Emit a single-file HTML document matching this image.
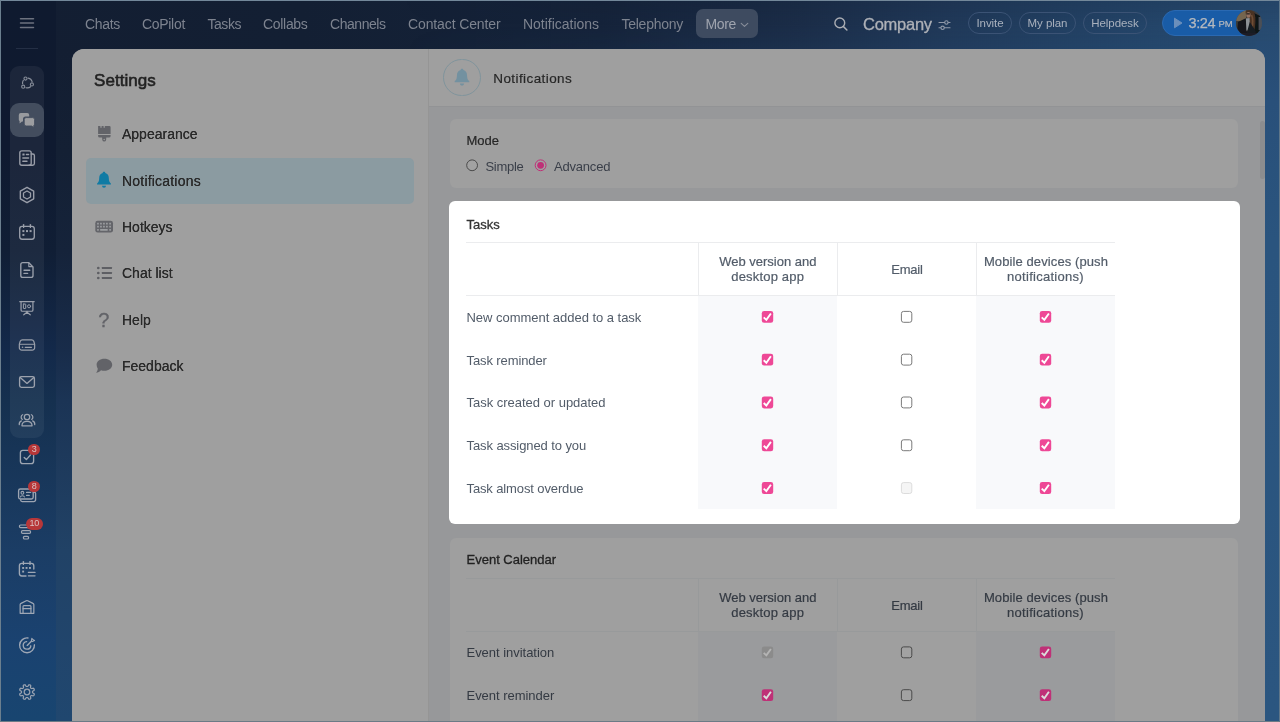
<!DOCTYPE html>
<html>
<head>
<meta charset="utf-8">
<title>Settings</title>
<style>
*{box-sizing:border-box;margin:0;padding:0}
html,body{width:1280px;height:722px;overflow:hidden}
body{font-family:"Liberation Sans",sans-serif;position:relative;background:#6b7f8e;color:#333}
.abs{position:absolute}
#top,#icons,#panel{will-change:transform}
#bg{position:absolute;left:1px;top:1px;width:1278px;height:720px;overflow:hidden;
 background:
  linear-gradient(180deg,rgba(16,27,49,1) 0px,rgba(16,27,49,1) 120px,rgba(16,27,49,0) 560px),
  linear-gradient(90deg,#1a4478 0px,#2c5280 200px,#33598a 1278px);
}
#hdr{position:absolute;left:0;top:0;width:1278px;height:60px;
 background:linear-gradient(90deg,#131e32 0px,#131f33 300px,#15233a 600px,#1b2d48 800px,#203959 950px,#244569 1155px,#284b70 1278px);}
#hdr2{position:absolute;left:400px;top:0;width:878px;height:48px;background:linear-gradient(180deg,rgba(8,14,30,0.10) 0px,rgba(8,14,30,0) 24px,rgba(45,100,155,0.07) 48px);-webkit-mask-image:linear-gradient(90deg,transparent 0,#000 300px);mask-image:linear-gradient(90deg,transparent 0,#000 300px)}
#side{position:absolute;left:0;top:0;width:55px;height:720px;
 background:linear-gradient(180deg,#0f1a2f 0px,#0f1a30 150px,#101e35 250px,#13294a 350px,#15304f 400px,#1b3d65 550px,#1a4270 640px,#184570 720px);}
#gutter{position:absolute;left:55px;top:48px;width:20px;height:672px;
 background:linear-gradient(180deg,#131e32 0px,#142034 102px,#15233a 202px,#182c4a 302px,#1b3455 352px,#214266 502px,#21456c 600px,#20476f 672px);}
#rgutter{position:absolute;left:1255px;top:40px;width:23px;height:680px;background:linear-gradient(180deg,#274b72 0,#29507a 60px,#2a547e 200px,#2b5680 680px)}
.nav{position:absolute;top:15px;font-size:14px;color:#7d838f;white-space:nowrap;line-height:18px}
.pill{position:absolute;top:12px;height:22px;border:1px solid #3b5375;border-radius:11px;color:#a9b1bd;font-size:11.5px;line-height:21px;text-align:center;letter-spacing:-0.05px}
#panel{position:absolute;left:72px;top:49px;width:1193px;height:690px;border-radius:12px 12px 0 0;background:#97989a;overflow:hidden}
#left{position:absolute;left:0;top:0;width:356px;height:690px;background:#9f9f9f}
#vline{position:absolute;left:356px;top:0;width:1px;height:690px;background:#959595}
#rhead{position:absolute;left:357px;top:0;width:836px;height:58px;background:#9f9f9f;border-bottom:1px solid #929395}
.mi{position:absolute;left:50px;font-size:14px;color:#2a2a2a;line-height:18px;white-space:nowrap;text-shadow:0 0 0.3px #2a2a2a}
.card{position:absolute;left:378px;width:788px;border-radius:6px;background:#9f9f9f}
.ct{position:absolute;left:16px;font-size:13px;line-height:16px;white-space:nowrap}
.th{position:absolute;font-size:13px;line-height:15px;text-align:center;white-space:nowrap}
.rl{position:absolute;left:16px;font-size:13px;line-height:16px;white-space:nowrap}
.cb{position:absolute;width:12px;height:12px;border-radius:2.5px}
.cb svg{position:absolute;left:0;top:0}
</style>
</head>
<body>
<div id="bg">
 <div id="hdr"></div><div id="hdr2"></div>
 <div id="side"></div>
 <div id="gutter"></div>
 <div id="rgutter"></div>
</div>
<div id="top">
 <svg class="abs" style="left:19px;top:17px" width="16" height="12" viewBox="0 0 16 12"><g stroke="#6d727f" stroke-width="1.5" stroke-linecap="round"><line x1="1.5" y1="1.8" x2="14.5" y2="1.8"/><line x1="1.5" y1="6.1" x2="14.5" y2="6.1"/><line x1="1.5" y1="10.4" x2="14.5" y2="10.4"/></g></svg>
 <div class="abs" style="left:16px;top:48px;width:22px;height:1px;background:#242f45"></div>
 <span class="nav" style="left:85px;letter-spacing:-0.32px">Chats</span>
 <span class="nav" style="left:142px;letter-spacing:-0.31px">CoPilot</span>
 <span class="nav" style="left:207.5px;letter-spacing:-0.46px">Tasks</span>
 <span class="nav" style="left:263px;letter-spacing:-0.31px">Collabs</span>
 <span class="nav" style="left:330px;letter-spacing:-0.46px">Channels</span>
 <span class="nav" style="left:408px;letter-spacing:-0.12px">Contact Center</span>
 <span class="nav" style="left:523px;letter-spacing:-0.02px">Notifications</span>
 <span class="nav" style="left:621.5px;letter-spacing:-0.26px">Telephony</span>
 <div class="abs" style="left:696px;top:9px;width:62px;height:29px;border-radius:7px;background:#3e4b60"></div>
 <span class="nav" style="left:705.5px;letter-spacing:-0.4px;color:#9fa4ae">More</span>
 <svg class="abs" style="left:740px;top:22px" width="9" height="6" viewBox="0 0 9 6"><path d="M1.2 1.3 L4.5 4.4 L7.8 1.3" fill="none" stroke="#888e9a" stroke-width="1.1" stroke-linecap="round" stroke-linejoin="round"/></svg>
 <svg class="abs" style="left:832px;top:15px" width="18" height="18" viewBox="0 0 18 18"><circle cx="7.8" cy="7.9" r="4.9" fill="none" stroke="#abaeb4" stroke-width="1.4"/><line x1="11.5" y1="11.6" x2="14.9" y2="15" stroke="#abaeb4" stroke-width="1.5" stroke-linecap="round"/></svg>
 <span class="abs" style="left:863px;top:14px;font-size:16.5px;line-height:20px;color:#aeb1b7;letter-spacing:-0.25px;white-space:nowrap;-webkit-text-stroke:0.3px #aeb1b7">Company</span>
 <svg class="abs" style="left:938px;top:19px" width="13" height="12" viewBox="0 0 13 12"><g fill="none" stroke="#8f98a8" stroke-width="1.1" stroke-linecap="round"><line x1="1" y1="3.5" x2="6.5" y2="3.5"/><line x1="10.3" y1="3.5" x2="12" y2="3.5"/><circle cx="8.4" cy="3.5" r="1.7"/><line x1="1" y1="8.8" x2="2.6" y2="8.8"/><line x1="6.5" y1="8.8" x2="12" y2="8.8"/><circle cx="4.6" cy="8.8" r="1.7"/></g></svg>
 <div class="pill" style="left:968px;width:44px">Invite</div>
 <div class="pill" style="left:1019px;width:57px">My plan</div>
 <div class="pill" style="left:1083px;width:64px">Helpdesk</div>
 <div class="abs" style="left:1162px;top:10px;width:100px;height:26px;border-radius:13px;background:#195ca7;border:1px solid #2a69b2"></div>
 <svg class="abs" style="left:1173px;top:17px" width="10" height="12" viewBox="0 0 10 12"><path d="M1.5 1.2 L9 6 L1.5 10.8 Z" fill="#6b8fbc" stroke="#6b8fbc" stroke-width="1" stroke-linejoin="round"/></svg>
 <span class="abs" style="left:1188.5px;top:14px;font-size:14.5px;line-height:18px;color:#b4b8be;letter-spacing:-0.4px;white-space:nowrap;-webkit-text-stroke:0.25px #b4b8be">3:24</span>
 <span class="abs" style="left:1218.5px;top:17px;font-size:9.5px;line-height:14px;color:#b4b8be;letter-spacing:-0.2px;white-space:nowrap;-webkit-text-stroke:0.2px #b4b8be">PM</span>
 <div class="abs" id="ava" style="left:1236px;top:10px;width:26px;height:26px;border-radius:13px;overflow:hidden;background:#3a3f44">
  <svg width="26" height="26" viewBox="0 0 26 26"><defs><filter id="bl" x="-10%" y="-10%" width="120%" height="120%"><feGaussianBlur stdDeviation="0.55"/></filter></defs><g filter="url(#bl)"><rect x="-2" y="-2" width="30" height="30" fill="#3b3a38"/><rect x="-1" y="-1" width="11" height="12" fill="#74654f"/><rect x="19" y="-1" width="8" height="9" fill="#3a3d40"/><path d="M18 3 L24 6 L25 22 L18 24 Z" fill="#101318"/><rect x="22.6" y="7" width="4" height="13" fill="#4b5056"/><path d="M9.5 1.5 C12 -0.5 17 -0.5 18.5 3 C20 8 19.5 14 18.5 20 L14 21 L13.5 9 L10 5 Z" fill="#4a3324"/><path d="M15.6 5 C17.2 9 17 14 15.8 19.5" stroke="#6f4d35" stroke-width="1.6" fill="none"/><ellipse cx="12.4" cy="4.9" rx="2.1" ry="2.8" fill="#94705e"/><rect x="10.4" y="3.2" width="3.4" height="1.3" fill="#2a2320"/><path d="M9.8 8.5 L13.6 8 L13.8 20.5 L10 20.5 Z" fill="#8e9297"/><path d="M2 12 L9.8 8.2 L10.4 21 L13 24 L7 27 L1 22 Z" fill="#14181d"/><path d="M13.8 12 L19 20 L21 27 L9 27 L11 22 Z" fill="#171a21"/><rect x="-1" y="23" width="28" height="4" fill="#1b1e25"/></g></svg>
 </div>
</div>
<div id="icons"><div class="abs" style="left:10px;top:66px;width:34px;height:372px;border-radius:9px;background:rgba(255,255,255,0.055)"></div>
<div class="abs" style="left:10px;top:103px;width:34px;height:34px;border-radius:9px;background:#434d5e"></div><svg class="abs" style="left:15px;top:71.3px" width="24" height="24" viewBox="-12 -12 24 24" fill="none" stroke="#878d99" stroke-width="1.35" stroke-linecap="round" stroke-linejoin="round"><g transform="translate(0.4 0)"><path d="M0.85 -4.83 A4.9 4.9 0 0 1 4.71 -1.35" stroke-width="1.2"/><path d="M3.15 3.75 A4.9 4.9 0 0 1 -1.35 4.71" stroke-width="1.2"/><path d="M-4.84 0.77 A4.9 4.9 0 0 1 -4.06 -2.74" stroke-width="1.2"/><circle cx="-1.9" cy="-4.4" r="1.55" stroke-width="1.1"/><circle cx="4.5" cy="1.4" r="1.55" stroke-width="1.1"/><circle cx="-4.2" cy="3.7" r="1.55" stroke-width="1.1"/></g></svg><svg class="abs" style="left:15px;top:108px" width="24" height="24" viewBox="-12 -12 24 24"><path d="M-6.2 -7 H0.2 A2 2 0 0 1 2.2 -5 V-3.6 H-1.4 A2.6 2.6 0 0 0 -4 -1 V1.6 H-5 L-7.4 3.6 V1 A2 2 0 0 1 -8.2 -0.6 V-5 A2 2 0 0 1 -6.2 -7Z" fill="#999b9f"/><path d="M-0.8 -2.4 H5.6 A2 2 0 0 1 7.6 -0.4 V4 A2 2 0 0 1 6.8 5.6 V7.6 L4.6 6 H-0.8 A2 2 0 0 1 -2.8 4 V-0.4 A2 2 0 0 1 -0.8 -2.4Z" fill="#9c9da0" stroke="#434d5e" stroke-width="0.9"/></svg><svg class="abs" style="left:15px;top:146px" width="24" height="24" viewBox="-12 -12 24 24" fill="none" stroke="#9a9ea8" stroke-width="1.35" stroke-linecap="round" stroke-linejoin="round"><rect x="-7.2" y="-7.2" width="11.4" height="14.4" rx="2"/><path d="M4.2 -4 H5.8 A1.6 1.6 0 0 1 7.4 -2.4 V5.4 A1.8 1.8 0 0 1 5.6 7.2 H2"/><rect x="-4.6" y="-4.6" width="2.2" height="2.2" rx="0.3" fill="#989da8" stroke="none"/><line x1="-0.6" y1="-3.5" x2="1.6" y2="-3.5"/><line x1="-4.2" y1="0" x2="1.6" y2="0"/><line x1="-4.2" y1="3.2" x2="0" y2="3.2"/></svg><svg class="abs" style="left:15px;top:183px" width="24" height="24" viewBox="-12.77 -12.77 25.53 25.53" fill="none" stroke="#9a9ea9" stroke-width="1.35" stroke-linecap="round" stroke-linejoin="round"><polygon points="7.10,4.10 0.00,8.20 -7.10,4.10 -7.10,-4.10 -0.00,-8.20 7.10,-4.10" stroke-width="1.5"/><polygon points="3.72,2.15 0.00,4.30 -3.72,2.15 -3.72,-2.15 -0.00,-4.30 3.72,-2.15" stroke-width="1.4"/></svg><svg class="abs" style="left:15px;top:220px" width="24" height="24" viewBox="-12 -12 24 24" fill="none" stroke="#9a9faa" stroke-width="1.35" stroke-linecap="round" stroke-linejoin="round"><rect x="-7.3" y="-5.6" width="14.6" height="12.8" rx="2.4"/><line x1="-3.4" y1="-7.4" x2="-3.4" y2="-4.6"/><line x1="3.4" y1="-7.4" x2="3.4" y2="-4.6"/><g stroke="none" fill="#9a9faa"><rect x="-4.6" y="-1.9" width="2" height="2"/><rect x="-1" y="-1.9" width="2" height="2"/><rect x="2.6" y="-1.9" width="2" height="2"/><rect x="-4.6" y="1.9" width="2" height="2"/></g></svg><svg class="abs" style="left:15px;top:258px" width="24" height="24" viewBox="-12 -12 24 24" fill="none" stroke="#9ba0ab" stroke-width="1.35" stroke-linecap="round" stroke-linejoin="round"><path d="M-4.2 -7.4 H1.6 L6 -3 V5.4 A2 2 0 0 1 4 7.4 H-4.2 A2 2 0 0 1 -6.2 5.4 V-5.4 A2 2 0 0 1 -4.2 -7.4Z"/><path d="M1.8 -7 V-3.4 H5.6" stroke-width="1.1"/><line x1="-3" y1="0.2" x2="2.8" y2="0.2"/><line x1="-3" y1="3.4" x2="0.6" y2="3.4"/></svg><svg class="abs" style="left:15px;top:296px" width="24" height="24" viewBox="-13.33 -13.33 26.67 26.67" fill="none" stroke="#9ca1ac" stroke-width="1.35" stroke-linecap="round" stroke-linejoin="round"><line x1="-8" y1="-7" x2="8" y2="-7"/><path d="M-6.6 -7 V2.2 A1.4 1.4 0 0 0 -5.2 3.6 H5.2 A1.4 1.4 0 0 0 6.6 2.2 V-7"/><line x1="0" y1="3.6" x2="0" y2="5"/><path d="M-3.6 7.6 L0 4.8 L3.6 7.6"/><rect x="-4" y="-4.4" width="2.6" height="5" rx="0.4" stroke-width="1.1"/><circle cx="2.3" cy="-1.9" r="1.7" stroke-width="1.1"/></svg><svg class="abs" style="left:15px;top:333px" width="24" height="24" viewBox="-13.48 -13.48 26.97 26.97" fill="none" stroke="#9ca1ac" stroke-width="1.35" stroke-linecap="round" stroke-linejoin="round"><path d="M-5.2 -5.8 H5.2 A2.6 2.6 0 0 1 7.6 -4.2 L8.6 -1 V3 A2.8 2.8 0 0 1 5.8 5.8 H-5.8 A2.8 2.8 0 0 1 -8.6 3 V-1 L-7.6 -4.2 A2.6 2.6 0 0 1 -5.2 -5.8Z"/><path d="M-8.4 -0.8 H8.4" stroke-width="1.1"/><line x1="-2" y1="2.6" x2="5" y2="2.6"/><circle cx="-5" cy="2.6" r="0.9" fill="#9ca1ac" stroke="none"/></svg><svg class="abs" style="left:15px;top:370.3px" width="24" height="24" viewBox="-12 -12 24 24" fill="none" stroke="#9ca2ad" stroke-width="1.35" stroke-linecap="round" stroke-linejoin="round"><rect x="-7.4" y="-5.4" width="14.8" height="10.8" rx="1.8"/><path d="M-6.8 -4.6 L0 1.4 L6.8 -4.6"/></svg><svg class="abs" style="left:15px;top:407.5px" width="24" height="24" viewBox="-12.77 -12.77 25.53 25.53" fill="none" stroke="#9ca3af" stroke-width="1.35" stroke-linecap="round" stroke-linejoin="round"><circle cx="0" cy="-3.2" r="2.9"/><path d="M-5.4 6.2 C-5.4 2.6 -3 1.4 0 1.4 C3 1.4 5.4 2.6 5.4 6.2 Z"/><path d="M-4.6 -5.6 C-6.6 -4.8 -6.8 -1.8 -5 -0.6"/><path d="M4.6 -5.6 C6.6 -4.8 6.8 -1.8 5 -0.6"/><path d="M-6 1 C-8 1.8 -8.4 3.6 -8.2 5"/><path d="M6 1 C8 1.8 8.4 3.6 8.2 5"/></svg><svg class="abs" style="left:14.8px;top:445.2px" width="24" height="24" viewBox="-12 -12 24 24" fill="none" stroke="#9da5b1" stroke-width="1.35" stroke-linecap="round" stroke-linejoin="round"><rect x="-6.6" y="-6.6" width="13.2" height="13.2" rx="2.4"/><path d="M-2.8 0.4 L-0.6 2.6 L3.4 -2"/></svg><svg class="abs" style="left:14.8px;top:482.6px" width="24" height="24" viewBox="-12 -12 24 24" fill="none" stroke="#9da5b2" stroke-width="1.35" stroke-linecap="round" stroke-linejoin="round"><rect x="-8.4" y="-6" width="14.6" height="10" rx="1.8"/><path d="M6.2 -3 H7 A1.6 1.6 0 0 1 8.6 -1.4 V4.8 A1.8 1.8 0 0 1 6.8 6.6 H-4.8 A1.8 1.8 0 0 1 -6.4 5"/><circle cx="-4.6" cy="-2.2" r="1.4" stroke-width="1.1"/><path d="M-6.6 2 C-6.4 0.4 -2.8 0.4 -2.6 2" stroke-width="1.1"/><line x1="-0.4" y1="-2.6" x2="3.6" y2="-2.6"/><line x1="-0.4" y1="0.4" x2="2.2" y2="0.4"/></svg><svg class="abs" style="left:14.399999999999999px;top:520px" width="24" height="24" viewBox="-12 -12 24 24" fill="none" stroke="#9ea6b3" stroke-width="1.35" stroke-linecap="round" stroke-linejoin="round"><rect x="-6.6" y="-7" width="13.2" height="2.6" rx="1.3" stroke-width="1.2"/><rect x="-4.6" y="-1.3" width="9.2" height="2.6" rx="1.3" stroke-width="1.2"/><rect x="-2.6" y="4.4" width="5.2" height="2.6" rx="1.3" stroke-width="1.2"/></svg><svg class="abs" style="left:15px;top:557px" width="24" height="24" viewBox="-12 -12 24 24" fill="none" stroke="#9ea7b4" stroke-width="1.35" stroke-linecap="round" stroke-linejoin="round"><path d="M-1 7 H-5.2 A2.4 2.4 0 0 1 -7.6 4.6 V-3.2 A2.4 2.4 0 0 1 -5.2 -5.6 H4.4 A2.4 2.4 0 0 1 6.8 -3.2 V0"/><line x1="-3.6" y1="-7.4" x2="-3.6" y2="-4.6"/><line x1="3" y1="-7.4" x2="3" y2="-4.6"/><g stroke="none" fill="#9ea7b4"><rect x="-4.8" y="-2" width="1.9" height="1.9"/><rect x="-1.4" y="-2" width="1.9" height="1.9"/><rect x="2" y="-2" width="1.9" height="1.9"/><rect x="-4.8" y="1.6" width="1.9" height="1.9"/></g><line x1="1.4" y1="3.4" x2="8" y2="3.4"/><line x1="1.4" y1="6.8" x2="8" y2="6.8"/></svg><svg class="abs" style="left:15px;top:594.7px" width="24" height="24" viewBox="-13.33 -13.33 26.67 26.67" fill="none" stroke="#9ea7b5" stroke-width="1.35" stroke-linecap="round" stroke-linejoin="round"><path d="M-7.6 7 V-2.6 A1.6 1.6 0 0 1 -6.6 -4 L-0.8 -6.9 A1.8 1.8 0 0 1 0.8 -6.9 L6.6 -4 A1.6 1.6 0 0 1 7.6 -2.6 V7 Z"/><path d="M-4.4 7 V-0.6 A1 1 0 0 1 -3.4 -1.6 H3.4 A1 1 0 0 1 4.4 -0.6 V7"/><line x1="-4.4" y1="1.8" x2="4.4" y2="1.8"/></svg><svg class="abs" style="left:15px;top:632.8px" width="24" height="24" viewBox="-12 -12 24 24" fill="none" stroke="#9ea7b5" stroke-width="1.35" stroke-linecap="round" stroke-linejoin="round"><path d="M1 -7 A7.4 7.4 0 1 0 7.4 -0.2"/><path d="M-0.4 -3.4 A3.8 3.8 0 1 0 3.8 0.8"/><line x1="0.2" y1="0.4" x2="4.4" y2="-3.8"/><path d="M4.4 -3.8 L4.8 -6.6 L6.2 -5.2 L7.6 -4.6 L5.4 -3.4 Z" stroke-width="1.1"/></svg><svg class="abs" style="left:15px;top:680px" width="24" height="24" viewBox="-12.77 -12.77 25.53 25.53" fill="none" stroke="#9aa3b1" stroke-width="1.35" stroke-linecap="round" stroke-linejoin="round"><path d="M7.53 3.12 L7.42 3.36 L7.29 3.59 L7.12 3.81 L6.88 3.97 L6.46 4.02 L5.82 3.89 L5.20 3.72 L4.80 3.69 L4.58 3.76 L4.42 3.87 L4.27 4.00 L4.14 4.14 L4.00 4.27 L3.87 4.42 L3.76 4.58 L3.69 4.80 L3.72 5.20 L3.89 5.82 L4.02 6.46 L3.97 6.88 L3.81 7.12 L3.59 7.29 L3.36 7.42 L3.12 7.53 L2.87 7.62 L2.61 7.70 L2.34 7.73 L2.06 7.67 L1.73 7.41 L1.37 6.87 L1.04 6.31 L0.79 6.00 L0.58 5.89 L0.38 5.86 L0.19 5.85 L0.00 5.85 L-0.19 5.85 L-0.38 5.86 L-0.58 5.89 L-0.79 6.00 L-1.04 6.31 L-1.37 6.87 L-1.73 7.41 L-2.06 7.67 L-2.34 7.73 L-2.61 7.70 L-2.87 7.62 L-3.12 7.53 L-3.36 7.42 L-3.59 7.29 L-3.81 7.12 L-3.97 6.88 L-4.02 6.46 L-3.89 5.82 L-3.72 5.20 L-3.69 4.80 L-3.76 4.58 L-3.87 4.42 L-4.00 4.27 L-4.14 4.14 L-4.27 4.00 L-4.42 3.87 L-4.58 3.76 L-4.80 3.69 L-5.20 3.72 L-5.82 3.89 L-6.46 4.02 L-6.88 3.97 L-7.12 3.81 L-7.29 3.59 L-7.42 3.36 L-7.53 3.12 L-7.62 2.87 L-7.70 2.61 L-7.73 2.34 L-7.67 2.06 L-7.41 1.73 L-6.87 1.37 L-6.31 1.04 L-6.00 0.79 L-5.89 0.58 L-5.86 0.38 L-5.85 0.19 L-5.85 0.00 L-5.85 -0.19 L-5.86 -0.38 L-5.89 -0.58 L-6.00 -0.79 L-6.31 -1.04 L-6.87 -1.37 L-7.41 -1.73 L-7.67 -2.06 L-7.73 -2.34 L-7.70 -2.61 L-7.62 -2.87 L-7.53 -3.12 L-7.42 -3.36 L-7.29 -3.59 L-7.12 -3.81 L-6.88 -3.97 L-6.46 -4.02 L-5.82 -3.89 L-5.20 -3.72 L-4.80 -3.69 L-4.58 -3.76 L-4.42 -3.87 L-4.27 -4.00 L-4.14 -4.14 L-4.00 -4.27 L-3.87 -4.42 L-3.76 -4.58 L-3.69 -4.80 L-3.72 -5.20 L-3.89 -5.82 L-4.02 -6.46 L-3.97 -6.88 L-3.81 -7.12 L-3.59 -7.29 L-3.36 -7.42 L-3.12 -7.53 L-2.87 -7.62 L-2.61 -7.70 L-2.34 -7.73 L-2.06 -7.67 L-1.73 -7.41 L-1.37 -6.87 L-1.04 -6.31 L-0.79 -6.00 L-0.58 -5.89 L-0.38 -5.86 L-0.19 -5.85 L-0.00 -5.85 L0.19 -5.85 L0.38 -5.86 L0.58 -5.89 L0.79 -6.00 L1.04 -6.31 L1.37 -6.87 L1.73 -7.41 L2.06 -7.67 L2.34 -7.73 L2.61 -7.70 L2.87 -7.62 L3.12 -7.53 L3.36 -7.42 L3.59 -7.29 L3.81 -7.12 L3.97 -6.88 L4.02 -6.46 L3.89 -5.82 L3.72 -5.20 L3.69 -4.80 L3.76 -4.58 L3.87 -4.42 L4.00 -4.27 L4.14 -4.14 L4.27 -4.00 L4.42 -3.87 L4.58 -3.76 L4.80 -3.69 L5.20 -3.72 L5.82 -3.89 L6.46 -4.02 L6.88 -3.97 L7.12 -3.81 L7.29 -3.59 L7.42 -3.36 L7.53 -3.12 L7.62 -2.87 L7.70 -2.61 L7.73 -2.34 L7.67 -2.06 L7.41 -1.73 L6.87 -1.37 L6.31 -1.04 L6.00 -0.79 L5.89 -0.58 L5.86 -0.38 L5.85 -0.19 L5.85 -0.00 L5.85 0.19 L5.86 0.38 L5.89 0.58 L6.00 0.79 L6.31 1.04 L6.87 1.37 L7.41 1.73 L7.67 2.06 L7.73 2.34 L7.70 2.61 L7.62 2.87Z" stroke-width="1.3"/><circle cx="0" cy="0" r="3" stroke-width="1.3"/></svg><div class="abs" style="left:28.3px;top:443.6px;width:11.5px;height:11.5px;border-radius:6px;background:#b73739;color:#dcc3c3;font-size:9px;line-height:11.5px;text-align:center;letter-spacing:-0.2px">3</div><div class="abs" style="left:28.3px;top:480.8px;width:11.5px;height:11.5px;border-radius:6px;background:#b73739;color:#dcc3c3;font-size:9px;line-height:11.5px;text-align:center;letter-spacing:-0.2px">8</div><div class="abs" style="left:25.5px;top:518.4px;width:17.6px;height:11.5px;border-radius:6px;background:#b73739;color:#dcc3c3;font-size:9px;line-height:11.5px;text-align:center;letter-spacing:-0.2px">10</div></div>
<div id="panel">
 <div id="left">
  <span class="abs" style="left:22px;top:21px;font-size:17px;line-height:22px;color:#222;white-space:nowrap;-webkit-text-stroke:0.55px #222;letter-spacing:0.05px">Settings</span>
  <div class="abs" style="left:14px;top:108.5px;width:328px;height:46px;border-radius:5px;background:#8b9ba1"></div>
  <!-- brush -->
  <svg class="abs" style="left:24px;top:76px" width="18" height="19" viewBox="0 0 18 19"><g fill="#626368"><path d="M2.1 1.1 H4.4 V2.7 H5.6 V1.1 H7.6 V2.7 H8.8 V1.1 H13.4 A1.2 1.2 0 0 1 14.6 2.3 V9 H2.1 Z"/><path d="M2.1 9.9 H14.6 V11 A1.6 1.6 0 0 1 13 12.6 H10.3 L10.1 15 A1.95 1.95 0 0 1 6.3 15 L6.1 12.6 H3.7 A1.6 1.6 0 0 1 2.1 11 Z"/></g><circle cx="8.2" cy="14.5" r="0.75" fill="#9f9f9f"/></svg>
  <span class="mi" style="top:76px">Appearance</span>
  <!-- bell -->
  <svg class="abs" style="left:24.3px;top:122px" width="16" height="18" viewBox="0 0 16 18"><path d="M8 0.8 C8.8 0.8 9.3 1.3 9.3 2 C11.6 2.6 12.8 4.5 12.8 7 C12.8 10 13.6 11.4 14.8 12.4 C15.2 12.8 15 13.6 14.4 13.6 H1.6 C1 13.6 0.8 12.8 1.2 12.4 C2.4 11.4 3.2 10 3.2 7 C3.2 4.5 4.4 2.6 6.7 2 C6.7 1.3 7.2 0.8 8 0.8Z" fill="#107ba4"/><path d="M6 14.8 H10 A2 2 0 0 1 6 14.8Z" fill="#107ba4"/></svg>
  <span class="mi" style="top:122.5px;letter-spacing:0.2px">Notifications</span>
  <!-- keyboard -->
  <svg class="abs" style="left:23px;top:171px" width="20" height="14" viewBox="0 0 20 14"><g transform="translate(0.3 0.8)"><rect x="0" y="0" width="17.7" height="11.8" rx="2.4" fill="#64656a"/><g fill="#9c9ea1"><rect x="1.81" y="1.95" width="1.7" height="1.7" rx="0.3"/><rect x="1.81" y="4.95" width="1.7" height="1.7" rx="0.3"/><rect x="4.80" y="1.95" width="1.7" height="1.7" rx="0.3"/><rect x="4.80" y="4.95" width="1.7" height="1.7" rx="0.3"/><rect x="7.79" y="1.95" width="1.7" height="1.7" rx="0.3"/><rect x="7.79" y="4.95" width="1.7" height="1.7" rx="0.3"/><rect x="10.75" y="1.95" width="1.7" height="1.7" rx="0.3"/><rect x="10.75" y="4.95" width="1.7" height="1.7" rx="0.3"/><rect x="13.95" y="1.95" width="1.7" height="1.7" rx="0.3"/><rect x="13.95" y="4.95" width="1.7" height="1.7" rx="0.3"/><rect x="1.81" y="8.15" width="1.7" height="1.7" rx="0.3"/><rect x="4.8" y="8.15" width="7.65" height="1.7" rx="0.3"/><rect x="13.95" y="8.15" width="1.7" height="1.7" rx="0.3"/></g></g></svg>
  <span class="mi" style="top:169px">Hotkeys</span>
  <!-- list -->
  <svg class="abs" style="left:24px;top:216px" width="18" height="16" viewBox="0 0 18 16"><g fill="#5e5f64"><circle cx="2.3" cy="3" r="1.35"/><circle cx="2.3" cy="8" r="1.35"/><circle cx="2.3" cy="13" r="1.35"/><rect x="5.8" y="2.05" width="10.2" height="1.9" rx="0.4"/><rect x="5.8" y="7.05" width="10.2" height="1.9" rx="0.4"/><rect x="5.8" y="12.05" width="10.2" height="1.9" rx="0.4"/></g></svg>
  <span class="mi" style="top:215px">Chat list</span>
  <!-- ? -->
  <span class="abs" style="left:26.3px;top:258.5px;font-size:20px;line-height:24px;color:#626368;-webkit-text-stroke:0.3px #626368">?</span>
  <span class="mi" style="top:261.5px">Help</span>
  <!-- bubble -->
  <svg class="abs" style="left:23px;top:309px" width="18" height="16" viewBox="0 0 18 16"><path d="M9.4 0.8 C13.8 0.8 17.2 3.4 17.2 6.8 C17.2 10.2 13.8 12.8 9.4 12.8 C8.2 12.8 7 12.6 6 12.2 C4.8 13.6 3 14.6 1 14.8 C2 13.8 2.6 12.4 2.8 10.8 C2 9.6 1.6 8.2 1.6 6.8 C1.6 3.4 5 0.8 9.4 0.8Z" fill="#626368"/></svg>
  <span class="mi" style="top:308px">Feedback</span>
 </div>
 <div id="vline"></div>
 <div id="rhead"></div>
<div id="content"><div class="abs" style="left:371px;top:9.5px;width:37.5px;height:37.5px;border-radius:50%;border:1px solid #80949c"></div>
<svg class="abs" style="left:381px;top:19px" width="18" height="19" viewBox="0 0 16 18"><path d="M8 0.8 C8.8 0.8 9.3 1.3 9.3 2 C11.6 2.6 12.8 4.5 12.8 7 C12.8 10 13.6 11.4 14.8 12.4 C15.2 12.8 15 13.6 14.4 13.6 H1.6 C1 13.6 0.8 12.8 1.2 12.4 C2.4 11.4 3.2 10 3.2 7 C3.2 4.5 4.4 2.6 6.7 2 C6.7 1.3 7.2 0.8 8 0.8Z" fill="#7391a0"/><path d="M6 14.8 H10 A2 2 0 0 1 6 14.8Z" fill="#7391a0"/></svg>
<span class="abs" style="left:421.3px;top:20.5px;font-size:13.5px;line-height:18px;color:#262626;white-space:nowrap;letter-spacing:0.41px;-webkit-text-stroke:0.18px #262626">Notifications</span>
<div class="card" style="top:70px;height:69px"></div>
<span class="ct abs" style="left:394.5px;top:84.30000000000001px;color:#262626;-webkit-text-stroke:0.2px #262626">Mode</span>
<svg class="abs" style="left:393px;top:109px" width="15" height="15" viewBox="0 0 15 15"><circle cx="7.1" cy="7.3" r="5.4" fill="#a2a2a2" stroke="#4a4a4a" stroke-width="1"/></svg>
<span class="rl" style="left:413.5px;top:109.80000000000001px;color:#3a3f49;letter-spacing:-0.3px">Simple</span>
<svg class="abs" style="left:461px;top:109px" width="15" height="15" viewBox="0 0 15 15"><circle cx="7.6" cy="7.3" r="5.4" fill="#a2a2a2" stroke="#bf3077" stroke-width="1"/><circle cx="7.6" cy="7.3" r="3.4" fill="#bf3077"/></svg>
<span class="rl" style="left:482px;top:109.80000000000001px;color:#3a3f49;letter-spacing:-0.2px">Advanced</span>
<div class="card" style="left:377px;top:152px;width:791px;height:323px;background:#fff;border-radius:6px"></div>
<span class="ct abs" style="left:394.5px;top:167.6px;color:#333;-webkit-text-stroke:0.3px #333">Tasks</span>
<div class="abs" style="left:394px;top:193px;width:649px;height:1px;background:#ebecee"></div>
<div class="abs" style="left:394px;top:246px;width:649px;height:1px;background:#ebecee"></div>
<div class="abs" style="left:626px;top:193px;width:1px;height:53px;background:#ebecee"></div>
<div class="abs" style="left:765px;top:193px;width:1px;height:53px;background:#ebecee"></div>
<div class="abs" style="left:904px;top:193px;width:1px;height:53px;background:#ebecee"></div>
<div class="abs" style="left:626px;top:247px;width:139px;height:212.5px;background:#f8f9fb"></div>
<div class="abs" style="left:904px;top:247px;width:139px;height:212.5px;background:#f8f9fb"></div>
<span class="th" style="left:615.8px;width:160px;top:205.2px;color:#525c69;letter-spacing:0px;-webkit-text-stroke:0.2px #525c69">Web version and</span>
<span class="th" style="left:615.7px;width:160px;top:220.2px;color:#525c69;letter-spacing:0.18px;-webkit-text-stroke:0.2px #525c69">desktop app</span>
<span class="th" style="left:755px;width:160px;top:213.2px;color:#525c69;letter-spacing:-0.2px;-webkit-text-stroke:0.2px #525c69">Email</span>
<span class="th" style="left:894px;width:160px;top:205.2px;color:#525c69;letter-spacing:0.1px;-webkit-text-stroke:0.2px #525c69">Mobile devices (push</span>
<span class="th" style="left:893.5px;width:160px;top:220.2px;color:#525c69;letter-spacing:0.28px;-webkit-text-stroke:0.2px #525c69">notifications)</span>
<span class="rl" style="left:394.5px;top:260.7px;color:#525c69;letter-spacing:-0.03px">New comment added to a task</span>
<svg class="abs" style="left:688px;top:260px" width="15" height="15" viewBox="0 0 15 15"><g transform="translate(1.80 1.90)"><rect x="0" y="0" width="11.4" height="11.9" rx="2.3" fill="#ee4896"/><path d="M1.9 6.5 L4.55 9.0 L9.1 2.6" fill="none" stroke="#fff" stroke-width="1.9" stroke-linejoin="miter"/></g></svg>
<svg class="abs" style="left:827px;top:260px" width="15" height="15" viewBox="0 0 15 15"><g transform="translate(1.90 1.90)"><rect x="0.5" y="0.5" width="10.4" height="10.9" rx="2.2" fill="#fff" stroke="#7a7a7a" stroke-width="1"/></g></svg>
<svg class="abs" style="left:966px;top:260px" width="15" height="15" viewBox="0 0 15 15"><g transform="translate(1.80 1.90)"><rect x="0" y="0" width="11.4" height="11.9" rx="2.3" fill="#ee4896"/><path d="M1.9 6.5 L4.55 9.0 L9.1 2.6" fill="none" stroke="#fff" stroke-width="1.9" stroke-linejoin="miter"/></g></svg>
<span class="rl" style="left:394.5px;top:303.5px;color:#525c69;letter-spacing:-0.1px">Task reminder</span>
<svg class="abs" style="left:688px;top:303px" width="15" height="15" viewBox="0 0 15 15"><g transform="translate(1.80 1.70)"><rect x="0" y="0" width="11.4" height="11.9" rx="2.3" fill="#ee4896"/><path d="M1.9 6.5 L4.55 9.0 L9.1 2.6" fill="none" stroke="#fff" stroke-width="1.9" stroke-linejoin="miter"/></g></svg>
<svg class="abs" style="left:827px;top:303px" width="15" height="15" viewBox="0 0 15 15"><g transform="translate(1.90 1.70)"><rect x="0.5" y="0.5" width="10.4" height="10.9" rx="2.2" fill="#fff" stroke="#7a7a7a" stroke-width="1"/></g></svg>
<svg class="abs" style="left:966px;top:303px" width="15" height="15" viewBox="0 0 15 15"><g transform="translate(1.80 1.70)"><rect x="0" y="0" width="11.4" height="11.9" rx="2.3" fill="#ee4896"/><path d="M1.9 6.5 L4.55 9.0 L9.1 2.6" fill="none" stroke="#fff" stroke-width="1.9" stroke-linejoin="miter"/></g></svg>
<span class="rl" style="left:394.5px;top:346.3px;color:#525c69;letter-spacing:-0.02px">Task created or updated</span>
<svg class="abs" style="left:688px;top:346px" width="15" height="15" viewBox="0 0 15 15"><g transform="translate(1.80 1.50)"><rect x="0" y="0" width="11.4" height="11.9" rx="2.3" fill="#ee4896"/><path d="M1.9 6.5 L4.55 9.0 L9.1 2.6" fill="none" stroke="#fff" stroke-width="1.9" stroke-linejoin="miter"/></g></svg>
<svg class="abs" style="left:827px;top:346px" width="15" height="15" viewBox="0 0 15 15"><g transform="translate(1.90 1.50)"><rect x="0.5" y="0.5" width="10.4" height="10.9" rx="2.2" fill="#fff" stroke="#7a7a7a" stroke-width="1"/></g></svg>
<svg class="abs" style="left:966px;top:346px" width="15" height="15" viewBox="0 0 15 15"><g transform="translate(1.80 1.50)"><rect x="0" y="0" width="11.4" height="11.9" rx="2.3" fill="#ee4896"/><path d="M1.9 6.5 L4.55 9.0 L9.1 2.6" fill="none" stroke="#fff" stroke-width="1.9" stroke-linejoin="miter"/></g></svg>
<span class="rl" style="left:394.5px;top:389.1px;color:#525c69;letter-spacing:-0.09px">Task assigned to you</span>
<svg class="abs" style="left:688px;top:389px" width="15" height="15" viewBox="0 0 15 15"><g transform="translate(1.80 1.30)"><rect x="0" y="0" width="11.4" height="11.9" rx="2.3" fill="#ee4896"/><path d="M1.9 6.5 L4.55 9.0 L9.1 2.6" fill="none" stroke="#fff" stroke-width="1.9" stroke-linejoin="miter"/></g></svg>
<svg class="abs" style="left:827px;top:389px" width="15" height="15" viewBox="0 0 15 15"><g transform="translate(1.90 1.30)"><rect x="0.5" y="0.5" width="10.4" height="10.9" rx="2.2" fill="#fff" stroke="#7a7a7a" stroke-width="1"/></g></svg>
<svg class="abs" style="left:966px;top:389px" width="15" height="15" viewBox="0 0 15 15"><g transform="translate(1.80 1.30)"><rect x="0" y="0" width="11.4" height="11.9" rx="2.3" fill="#ee4896"/><path d="M1.9 6.5 L4.55 9.0 L9.1 2.6" fill="none" stroke="#fff" stroke-width="1.9" stroke-linejoin="miter"/></g></svg>
<span class="rl" style="left:394.5px;top:431.9px;color:#525c69;letter-spacing:-0.12px">Task almost overdue</span>
<svg class="abs" style="left:688px;top:432px" width="15" height="15" viewBox="0 0 15 15"><g transform="translate(1.80 1.10)"><rect x="0" y="0" width="11.4" height="11.9" rx="2.3" fill="#ee4896"/><path d="M1.9 6.5 L4.55 9.0 L9.1 2.6" fill="none" stroke="#fff" stroke-width="1.9" stroke-linejoin="miter"/></g></svg>
<svg class="abs" style="left:827px;top:432px" width="15" height="15" viewBox="0 0 15 15"><g transform="translate(1.90 1.10)"><rect x="0.5" y="0.5" width="10.4" height="10.9" rx="2.2" fill="#f5f5f5" stroke="#dcdcdc" stroke-width="1"/></g></svg>
<svg class="abs" style="left:966px;top:432px" width="15" height="15" viewBox="0 0 15 15"><g transform="translate(1.80 1.10)"><rect x="0" y="0" width="11.4" height="11.9" rx="2.3" fill="#ee4896"/><path d="M1.9 6.5 L4.55 9.0 L9.1 2.6" fill="none" stroke="#fff" stroke-width="1.9" stroke-linejoin="miter"/></g></svg>
<div class="card" style="top:489px;height:300px"></div>
<span class="ct abs" style="left:394.5px;top:503.1px;color:#222;-webkit-text-stroke:0.3px #222">Event Calendar</span>
<div class="abs" style="left:394px;top:528.5px;width:649px;height:1px;background:#989a9b"></div>
<div class="abs" style="left:394px;top:581.5px;width:649px;height:1px;background:#989a9b"></div>
<div class="abs" style="left:626px;top:528.5px;width:1px;height:53px;background:#989a9b"></div>
<div class="abs" style="left:765px;top:528.5px;width:1px;height:53px;background:#989a9b"></div>
<div class="abs" style="left:904px;top:528.5px;width:1px;height:53px;background:#989a9b"></div>
<div class="abs" style="left:626px;top:582.5px;width:139px;height:126.89999999999998px;background:#9a9b9d"></div>
<div class="abs" style="left:904px;top:582.5px;width:139px;height:126.89999999999998px;background:#9a9b9d"></div>
<span class="th" style="left:615.8px;width:160px;top:540.7px;color:#343a43;letter-spacing:0px;-webkit-text-stroke:0.2px #343a43">Web version and</span>
<span class="th" style="left:615.7px;width:160px;top:555.7px;color:#343a43;letter-spacing:0.18px;-webkit-text-stroke:0.2px #343a43">desktop app</span>
<span class="th" style="left:755px;width:160px;top:548.7px;color:#343a43;letter-spacing:-0.2px;-webkit-text-stroke:0.2px #343a43">Email</span>
<span class="th" style="left:894px;width:160px;top:540.7px;color:#343a43;letter-spacing:0.1px;-webkit-text-stroke:0.2px #343a43">Mobile devices (push</span>
<span class="th" style="left:893.5px;width:160px;top:555.7px;color:#343a43;letter-spacing:0.28px;-webkit-text-stroke:0.2px #343a43">notifications)</span>
<span class="rl" style="left:394.5px;top:596.2px;color:#343a43;letter-spacing:-0.03px">Event invitation</span>
<svg class="abs" style="left:688px;top:596px" width="15" height="15" viewBox="0 0 15 15"><g transform="translate(1.80 1.40)"><rect x="0" y="0" width="11.4" height="11.9" rx="2.3" fill="#8b8b8b"/><path d="M1.9 6.5 L4.55 9.0 L9.1 2.6" fill="none" stroke="#b4b4b4" stroke-width="1.9" stroke-linejoin="miter"/></g></svg>
<svg class="abs" style="left:827px;top:596px" width="15" height="15" viewBox="0 0 15 15"><g transform="translate(1.90 1.40)"><rect x="0.5" y="0.5" width="10.4" height="10.9" rx="2.2" fill="#a2a2a2" stroke="#4b4b4b" stroke-width="1"/></g></svg>
<svg class="abs" style="left:966px;top:596px" width="15" height="15" viewBox="0 0 15 15"><g transform="translate(1.80 1.40)"><rect x="0" y="0" width="11.4" height="11.9" rx="2.3" fill="#bf3077"/><path d="M1.9 6.5 L4.55 9.0 L9.1 2.6" fill="none" stroke="#dcdcdc" stroke-width="1.9" stroke-linejoin="miter"/></g></svg>
<span class="rl" style="left:394.5px;top:639.0px;color:#343a43;letter-spacing:-0.03px">Event reminder</span>
<svg class="abs" style="left:688px;top:639px" width="15" height="15" viewBox="0 0 15 15"><g transform="translate(1.80 1.20)"><rect x="0" y="0" width="11.4" height="11.9" rx="2.3" fill="#bf3077"/><path d="M1.9 6.5 L4.55 9.0 L9.1 2.6" fill="none" stroke="#dcdcdc" stroke-width="1.9" stroke-linejoin="miter"/></g></svg>
<svg class="abs" style="left:827px;top:639px" width="15" height="15" viewBox="0 0 15 15"><g transform="translate(1.90 1.20)"><rect x="0.5" y="0.5" width="10.4" height="10.9" rx="2.2" fill="#a2a2a2" stroke="#4b4b4b" stroke-width="1"/></g></svg>
<svg class="abs" style="left:966px;top:639px" width="15" height="15" viewBox="0 0 15 15"><g transform="translate(1.80 1.20)"><rect x="0" y="0" width="11.4" height="11.9" rx="2.3" fill="#bf3077"/><path d="M1.9 6.5 L4.55 9.0 L9.1 2.6" fill="none" stroke="#dcdcdc" stroke-width="1.9" stroke-linejoin="miter"/></g></svg>
<span class="rl" style="left:394.5px;top:681.8px;color:#343a43;letter-spacing:-0.03px">Event update</span>
<svg class="abs" style="left:688px;top:682px" width="15" height="15" viewBox="0 0 15 15"><g transform="translate(1.80 1.00)"><rect x="0" y="0" width="11.4" height="11.9" rx="2.3" fill="#bf3077"/><path d="M1.9 6.5 L4.55 9.0 L9.1 2.6" fill="none" stroke="#dcdcdc" stroke-width="1.9" stroke-linejoin="miter"/></g></svg>
<svg class="abs" style="left:827px;top:682px" width="15" height="15" viewBox="0 0 15 15"><g transform="translate(1.90 1.00)"><rect x="0.5" y="0.5" width="10.4" height="10.9" rx="2.2" fill="#a2a2a2" stroke="#4b4b4b" stroke-width="1"/></g></svg>
<svg class="abs" style="left:966px;top:682px" width="15" height="15" viewBox="0 0 15 15"><g transform="translate(1.80 1.00)"><rect x="0" y="0" width="11.4" height="11.9" rx="2.3" fill="#bf3077"/><path d="M1.9 6.5 L4.55 9.0 L9.1 2.6" fill="none" stroke="#dcdcdc" stroke-width="1.9" stroke-linejoin="miter"/></g></svg>
<div class="abs" style="left:1188px;top:72px;width:4.5px;height:58px;border-radius:3px;background:#8c8d8f"></div></div><!--/content-->
</div>
<div class="abs" style="left:0;top:0;width:1280px;height:1px;background:#73889a"></div>
<div class="abs" style="left:0;top:721px;width:1280px;height:1px;background:#6b7b86"></div>
<div class="abs" style="left:0;top:0;width:1px;height:722px;background:#6b7f8e"></div>
<div class="abs" style="left:1279px;top:0;width:1px;height:722px;background:#5f7689"></div>
</body>
</html>
